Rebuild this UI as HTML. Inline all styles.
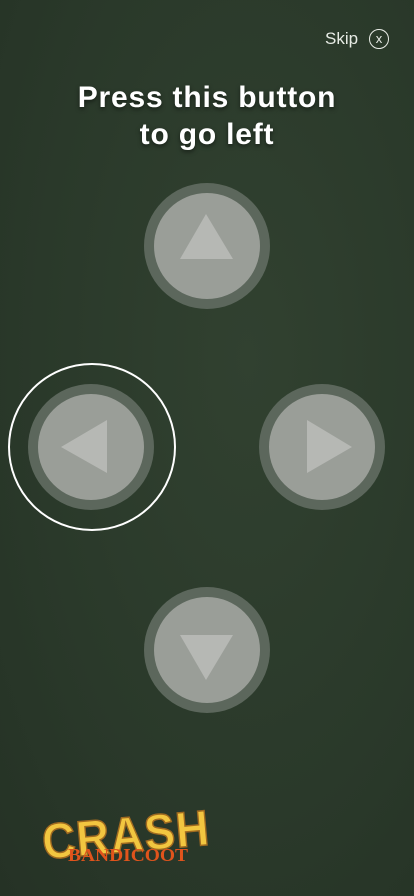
<!DOCTYPE html>
<html><head><meta charset="utf-8"><style>
html,body{margin:0;padding:0}
body{width:414px;height:896px;background:#2b3a2b;position:relative;overflow:hidden;font-family:"Liberation Sans",sans-serif}
.bg{position:absolute;inset:0;background:radial-gradient(ellipse at 60% 40%,#314130 0%,#2a392a 60%,#253225 100%)}
.skip{position:absolute;left:325px;top:29px;color:#e8ece6;font-size:17px}
.x{position:absolute;left:369px;top:29px;width:18px;height:18px;border:1.5px solid #e8ece6;border-radius:50%;color:#e8ece6;font-size:13px;line-height:18px;text-align:center}
h1{position:absolute;top:79px;left:0;width:414px;margin:0;text-align:center;color:#fff;font-size:30px;line-height:37px;font-weight:bold;letter-spacing:0.8px;text-shadow:0 2px 4px rgba(0,0,0,.5)}
</style></head><body>
<div class="bg"></div>
<div class="skip">Skip</div><div class="x">x</div>
<h1>Press this button<br>to go left</h1>
<svg width="414" height="896" style="position:absolute;left:0;top:0">
<g>
<circle cx="207" cy="246" r="63" fill="#5c675c"/><circle cx="207" cy="246" r="53" fill="#9a9e98"/>
<polygon points="206,214 233,259 180,259" fill="#b6b8b4"/>
<circle cx="91" cy="447" r="63" fill="#5c675c"/><circle cx="91" cy="447" r="53" fill="#9a9e98"/>
<polygon points="61,447 107,420 107,473" fill="#b6b8b4"/>
<circle cx="92" cy="447" r="83" fill="none" stroke="#fff" stroke-width="2"/>
<circle cx="322" cy="447" r="63" fill="#5c675c"/><circle cx="322" cy="447" r="53" fill="#9a9e98"/>
<polygon points="352,447 307,420 307,473" fill="#b6b8b4"/>
<circle cx="207" cy="650" r="63" fill="#5c675c"/><circle cx="207" cy="650" r="53" fill="#9a9e98"/>
<polygon points="180,635 233,635 206,680" fill="#b6b8b4"/>
</g>
<g transform="rotate(-5 125 835)">
<text x="42" y="852" font-family="Liberation Sans" font-weight="bold" font-size="50" fill="#f2c640" stroke="#a06a20" stroke-width="1.5" letter-spacing="1" textLength="168" lengthAdjust="spacingAndGlyphs">CRASH</text>
</g>
<text x="68" y="861" font-family="Liberation Serif" font-weight="bold" font-size="18" fill="#e0541c" textLength="120" lengthAdjust="spacingAndGlyphs">BANDICOOT</text>
</svg>
</body></html>
